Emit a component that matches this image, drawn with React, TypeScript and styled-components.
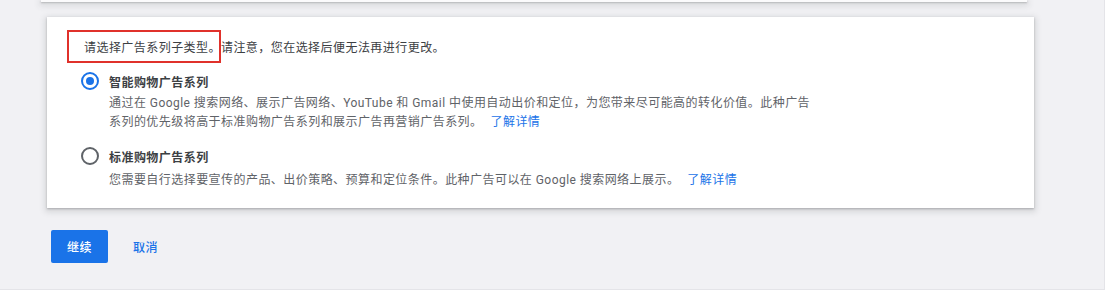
import React from "react";
import styled, { createGlobalStyle } from "styled-components";

const GlobalStyle = createGlobalStyle`
  html, body {
    margin: 0;
    padding: 0;
    background: #ffffff;
  }
  body {
    font-family: Roboto, "Noto Sans CJK SC", "Noto Sans", sans-serif;
    -webkit-font-smoothing: antialiased;
  }
`;

const Page = styled.div`
  width: 1105px;
  height: 290px;
  box-sizing: border-box;
  background: #f1f1f4;
  border-right: 1px solid #e4e4e8;
  border-bottom: 1px solid #e4e4e8;
  display: flex;
  flex-direction: column;
  padding: 0 0 0 47px;
  overflow: hidden;
`;

const PrevCard = styled.div`
  width: 986px;
  height: 2px;
  margin-left: -6px;
  background: #fbfbfc;
  box-shadow: 0 1px 2px rgba(60, 64, 67, 0.3), 0 2px 6px 2px rgba(60, 64, 67, 0.12);
`;

const Card = styled.div`
  width: 987px;
  margin-top: 15px;
  box-sizing: border-box;
  background: #ffffff;
  box-shadow: 0 1px 2px rgba(60, 64, 67, 0.3), 0 2px 6px 2px rgba(60, 64, 67, 0.15);
  padding: 22px 0 18px 37px;
  display: flex;
  flex-direction: column;
  letter-spacing: 0.45px;
`;

const Intro = styled.div`
  font-size: 12px;
  line-height: 18px;
  color: #3c4043;
`;

const Marked = styled.span`
  position: relative;

  &::before {
    content: "";
    position: absolute;
    left: -17px;
    right: 0;
    top: -11px;
    bottom: -8px;
    border: 2px solid #e0312b;
    pointer-events: none;
  }
`;

const Option = styled.div`
  display: flex;
  flex-direction: column;
  margin-top: 14px;
  margin-left: -3px;
`;

const OptionHead = styled.label`
  display: flex;
  align-items: center;
  gap: 10px;
  height: 20px;
  cursor: pointer;
`;

const Radio = styled.span<{ $checked?: boolean }>`
  width: 18px;
  height: 18px;
  box-sizing: border-box;
  border-radius: 50%;
  border: 2px solid ${(p) => (p.$checked ? "#1a73e8" : "#5f6368")};
  display: flex;
  align-items: center;
  justify-content: center;
  flex-shrink: 0;

  &::after {
    content: "";
    width: 8px;
    height: 8px;
    border-radius: 50%;
    background: ${(p) => (p.$checked ? "#1a73e8" : "transparent")};
  }
`;

const OptionTitle = styled.span`
  font-size: 12px;
  font-weight: 700;
  color: #3c4043;
`;

const Desc = styled.div<{ $gap?: number }>`
  margin: ${(p) => p.$gap ?? 3}px 0 0 28px;
  max-width: 702px;
  font-size: 12px;
  line-height: 19px;
  color: #5f6368;
`;

const Link = styled.a`
  color: #1a73e8;
  text-decoration: none;
  margin-left: 8px;
  cursor: pointer;
`;

const Actions = styled.div`
  display: flex;
  align-items: center;
  gap: 25px;
  margin: 22px 0 0 4px;
`;

const PrimaryButton = styled.button`
  width: 57px;
  height: 33px;
  border: none;
  border-radius: 2px;
  background: #1a73e8;
  color: #ffffff;
  font-family: inherit;
  font-size: 12px;
  font-weight: 500;
  letter-spacing: 0.45px;
  cursor: pointer;
`;

const TextButton = styled.button`
  border: none;
  background: none;
  padding: 0;
  color: #1a73e8;
  font-family: inherit;
  font-size: 12px;
  font-weight: 500;
  letter-spacing: 0.45px;
  cursor: pointer;
`;

export default function App() {
  return (
    <>
      <GlobalStyle />
      <Page>
        <PrevCard />
        <Card>
          <Intro>
            <Marked>请选择广告系列子类型。</Marked>请注意，您在选择后便无法再进行更改。
          </Intro>
          <Option>
            <OptionHead>
              <Radio $checked />
              <OptionTitle>智能购物广告系列</OptionTitle>
            </OptionHead>
            <Desc>
              通过在 Google 搜索网络、展示广告网络、YouTube 和 Gmail
              中使用自动出价和定位，为您带来尽可能高的转化价值。此种广告系列的优先级将高于标准购物广告系列和展示广告再营销广告系列。
              <Link>了解详情</Link>
            </Desc>
          </Option>
          <Option>
            <OptionHead>
              <Radio />
              <OptionTitle>标准购物广告系列</OptionTitle>
            </OptionHead>
            <Desc $gap={5}>
              您需要自行选择要宣传的产品、出价策略、预算和定位条件。此种广告可以在 Google 搜索网络上展示。
              <Link>了解详情</Link>
            </Desc>
          </Option>
        </Card>
        <Actions>
          <PrimaryButton>继续</PrimaryButton>
          <TextButton>取消</TextButton>
        </Actions>
      </Page>
    </>
  );
}
